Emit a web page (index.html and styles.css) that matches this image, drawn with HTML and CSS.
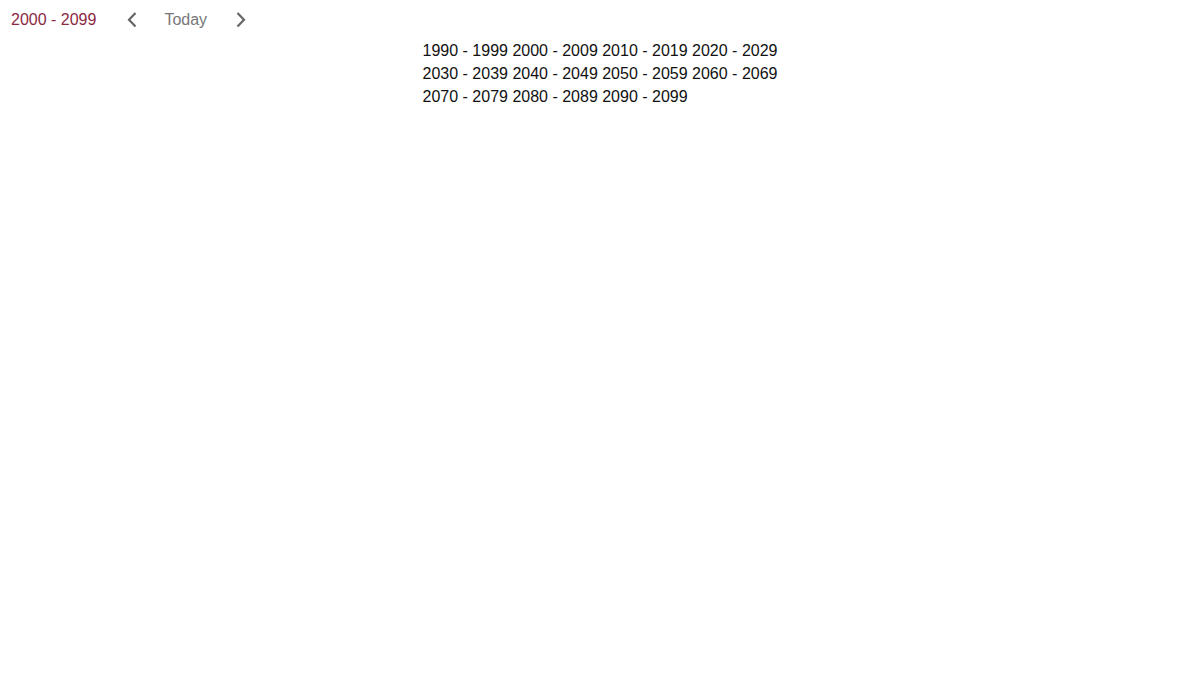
FILE: index.html
```html
<!DOCTYPE html>
<html>
<head>
<meta charset="utf-8">
<link rel="stylesheet" href="styles.css">
</head>
<body>
<div class="header">
  <span class="title">2000 - 2099</span>
  <button class="nav prev" aria-label="Previous">
    <svg width="12" height="16" viewBox="0 0 12 16"><path d="M9.5 1 L3 7.8 L9.5 14.6" fill="none" stroke="#666" stroke-width="2.2"/></svg>
  </button>
  <span class="today">Today</span>
  <button class="nav next" aria-label="Next">
    <svg width="12" height="16" viewBox="0 0 12 16"><path d="M2.5 1 L9 7.8 L2.5 14.6" fill="none" stroke="#666" stroke-width="2.2"/></svg>
  </button>
</div>
<div class="decades">
  <span>1990 - 1999</span><span>2000 - 2009</span><span>2010 - 2019</span><span>2020 - 2029</span>
  <span>2030 - 2039</span><span>2040 - 2049</span><span>2050 - 2059</span><span>2060 - 2069</span>
  <span>2070 - 2079</span><span>2080 - 2089</span><span>2090 - 2099</span>
</div>
</body>
</html>
```
FILE: styles.css
```css
html, body {
  margin: 0;
  padding: 0;
  background: #fff;
  font-family: "Liberation Sans", Arial, sans-serif;
  font-size: 16px;
  color: #111;
}
.header {
  display: flex;
  align-items: center;
  height: 38px;
  padding-top: 1px;
  padding-left: 11px;
}
.title {
  color: #8b2942;
  line-height: 18px;
}
.nav {
  display: flex;
  align-items: center;
  justify-content: center;
  background: none;
  border: 0;
  padding: 0;
  width: 12px;
  height: 16px;
}
.prev {
  margin-left: 30px;
}
.today {
  color: #777;
  margin-left: 26px;
}
.next {
  margin-left: 28px;
}
.decades {
  display: grid;
  grid-template-columns: repeat(4, auto);
  column-gap: 4.45px;
  justify-content: center;
  justify-items: start;
  line-height: 23px;
}
```
